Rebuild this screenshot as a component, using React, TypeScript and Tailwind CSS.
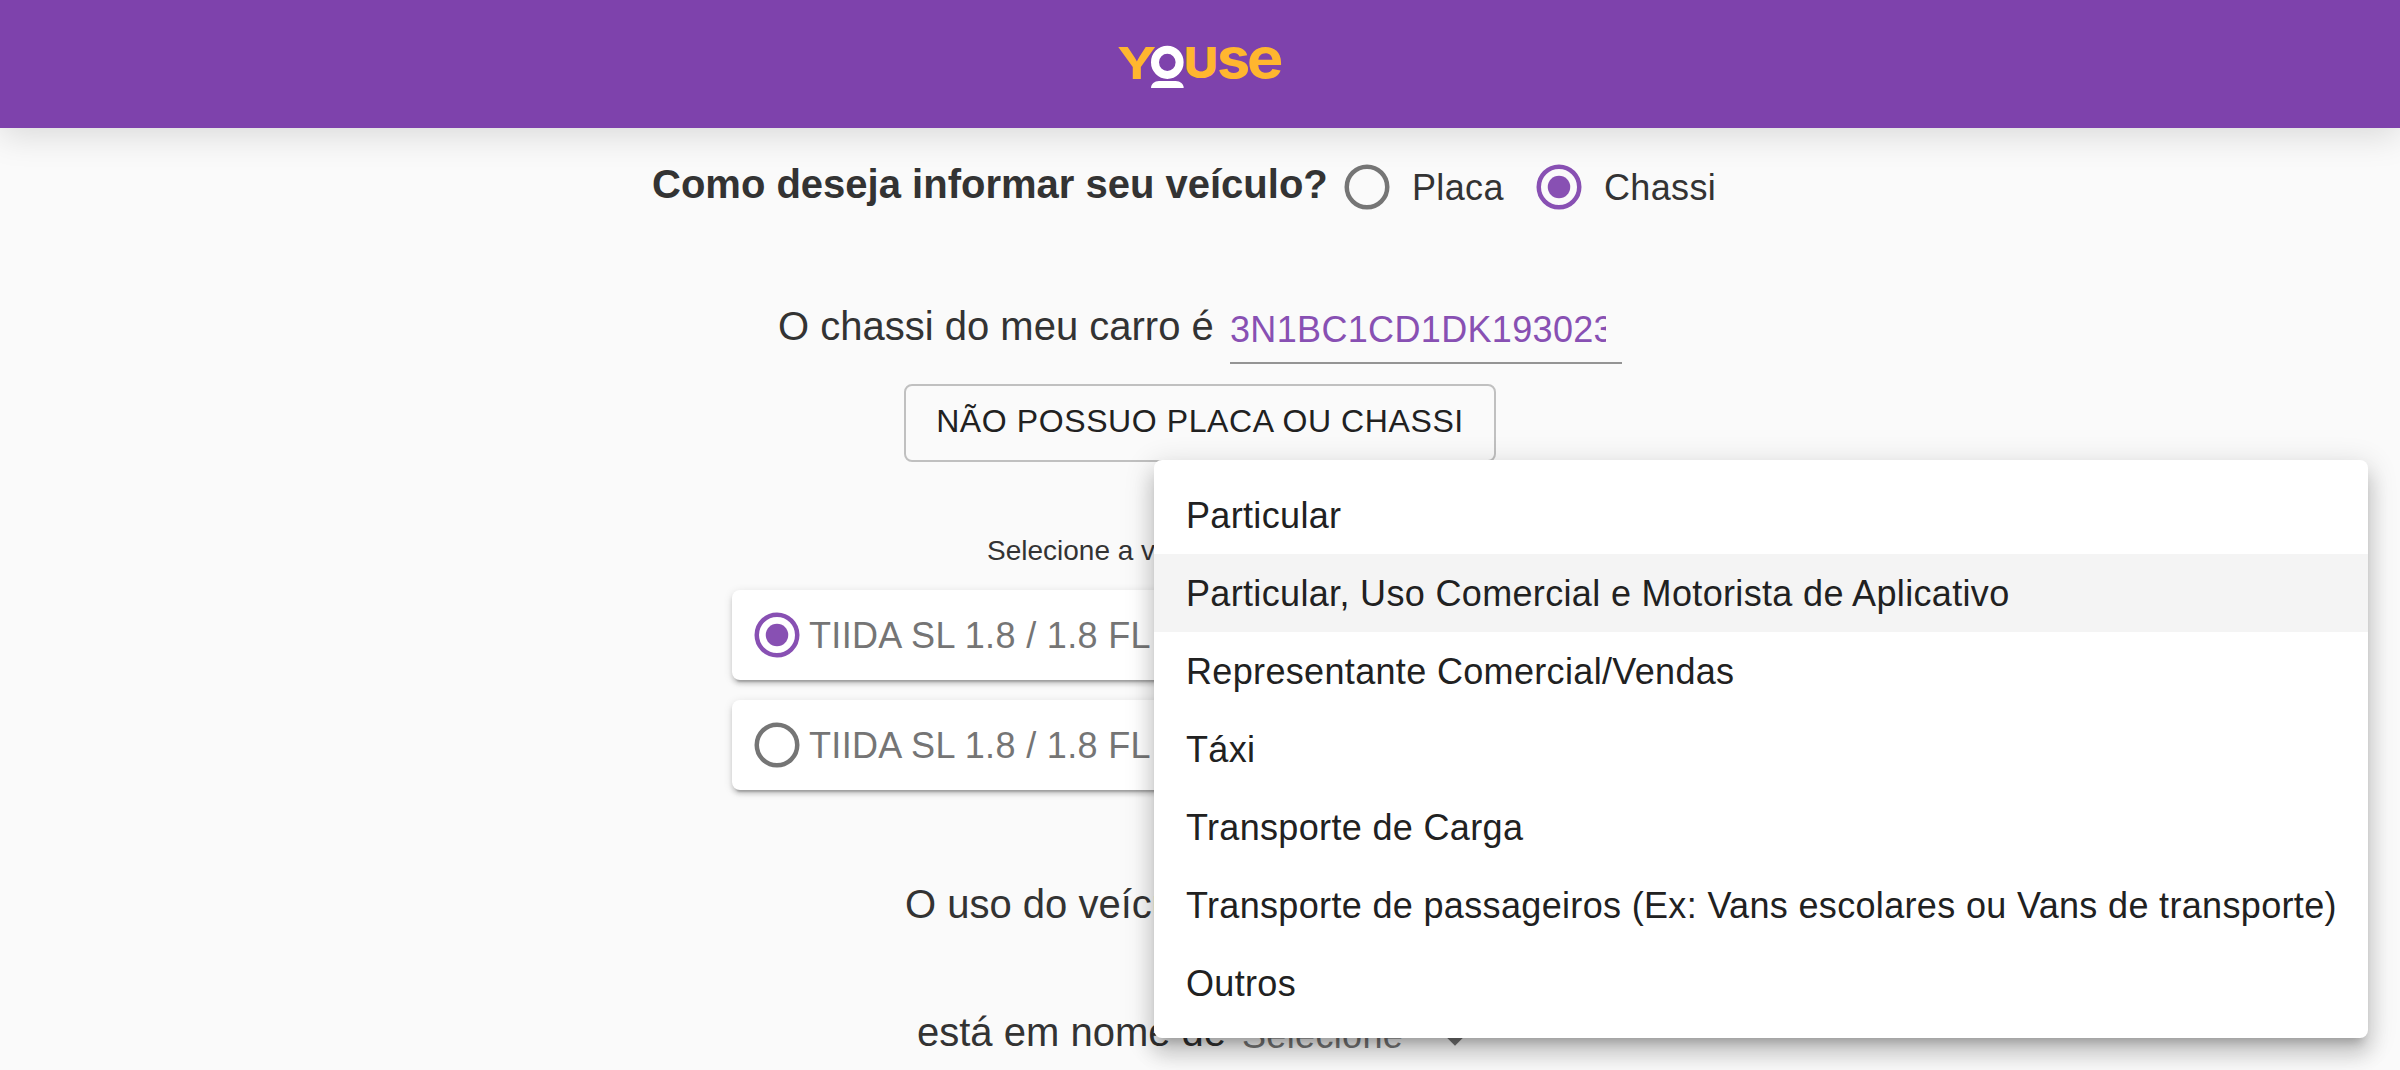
function Radio({ checked = false }: { checked?: boolean }) {
  return (
    <svg
      viewBox="0 0 54 54"
      className={checked ? "size-[54px] shrink-0 text-[#8850b3]" : "size-[54px] shrink-0 text-[#757575]"}
      fill="none"
    >
      <circle cx="27" cy="27" r="20.25" stroke="currentColor" strokeWidth="4.5" />
      {checked && <circle cx="27" cy="27" r="11.25" fill="currentColor" />}
    </svg>
  );
}

function Logo() {
  return (
    <svg viewBox="-10 -20 190 90" className="h-[90px] w-[190px]" fontFamily="Inter, sans-serif">
      <g fill="#ffb62f">
        <text transform="translate(2 37.500) scale(1.24 1)" fontSize="43.500" fontWeight="700">Y</text>
        <text transform="translate(68.800 37.400) scale(1.1 1)" fontSize="43" fontWeight="800">U</text>
        <text transform="translate(102 37.200) scale(1.06 1)" fontSize="56" fontWeight="700">s</text>
        <text transform="translate(132 37.200) scale(1.09 1)" fontSize="56" fontWeight="700">e</text>
      </g>
      <ellipse cx="52.3" cy="21.3" rx="12.3" ry="12.600" fill="none" stroke="#fff" strokeWidth="8" />
      <path d="M36 47c0-4 3.500-7 8-7h16.700c4.500 0 8 3 8 7z" fill="#fff" />
    </svg>
  );
}

const options = [
  "Particular",
  "Particular, Uso Comercial e Motorista de Aplicativo",
  "Representante Comercial/Vendas",
  "Táxi",
  "Transporte de Carga",
  "Transporte de passageiros (Ex: Vans escolares ou Vans de transporte)",
  "Outros",
];

function Version({ checked = false }: { checked?: boolean }) {
  return (
    <label className="flex h-[90px] items-center rounded-lg bg-white pl-[18px] text-[36px] leading-[54px] tracking-[0.00938em] text-[#757575] shadow-[0_6px_2px_-4px_rgba(0,0,0,0.2),0_4px_4px_0_rgba(0,0,0,0.14),0_2px_10px_0_rgba(0,0,0,0.12)]">
      <Radio checked={checked} />
      <span className="ml-[5px] pt-[2px]">TIIDA SL 1.8 / 1.8 FL</span>
    </label>
  );
}

export default function App() {
  return (
    <div className="relative flex h-[1070px] w-[2400px] flex-col overflow-hidden bg-[#fafafa] font-['Liberation_Sans',Arial,sans-serif] text-[#333333]">
      <header className="flex h-32 shrink-0 items-center justify-center bg-[#7e42ac] pt-1 shadow-[0_8px_32px_rgba(0,0,0,0.13)]">
        <Logo />
      </header>

      <main className="flex flex-col">
        <section className="flex h-[168px] items-start pt-[26px] pl-[652px] text-[36px] leading-[54px] tracking-[0.00938em]">
          <h1 className="w-[688px] text-[40px] leading-[60px] font-bold tracking-normal whitespace-nowrap">Como deseja informar seu veículo?</h1>
          <label className="mt-[5px] flex w-[192px] items-center gap-[18px]">
            <Radio />
            <span className="pt-[2px]">Placa</span>
          </label>
          <label className="mt-[5px] flex items-center gap-[18px]">
            <Radio checked />
            <span className="pt-[2px]">Chassi</span>
          </label>
        </section>

        <section className="flex h-[88px] items-start pl-[778px]">
          <span className="w-[452px] text-[40px] leading-[60px] whitespace-nowrap">O chassi do meu carro é</span>
          <div className="mt-[6px] h-[62px] w-[392px] border-b-2 border-[#949494] pt-px text-[36px] leading-[54px] tracking-[0.00938em] text-[#8850b3]">
            <div className="w-[376px] overflow-hidden whitespace-nowrap">3N1BC1CD1DK193023</div>
          </div>
        </section>

        <button className="mx-auto h-[78px] w-[592px] rounded-lg border-2 border-black/23 pb-[4px] text-[32px] leading-[54px] tracking-[0.6px] whitespace-nowrap text-[#212121]">
          NÃO POSSUO PLACA OU CHASSI
        </button>

        <p className="mt-[68px] h-[60px] pl-[987px] text-[28px] leading-[42px]">Selecione a versão</p>

        <div className="mx-auto flex w-[936px] flex-col gap-5">
          <Version checked />
          <Version />
        </div>

        <p className="mt-[84px] pl-[905px] text-[40px] leading-[60px]">O uso do veículo</p>

        <div className="mt-[68px] flex h-[60px] items-start pl-[917px] text-[40px] leading-[60px]">
          <span className="w-[325px] whitespace-nowrap">está em nome de</span>
          <span className="mt-[7px] w-[186px] text-[36px] leading-[54px] tracking-[0.00938em] text-[#757575]">Selecione</span>
          <svg viewBox="0 0 24 24" className="mt-px size-[54px] text-[#757575]" fill="currentColor">
            <path d="M7 14l5 5 5-5z" />
          </svg>
        </div>
      </main>

      <ul className="absolute top-[460px] left-[1154px] h-[578px] w-[1214px] rounded-lg bg-white py-4 text-[36px] leading-[54px] tracking-[0.00938em] text-[#212121] shadow-[0_10px_10px_-6px_rgba(0,0,0,0.2),0_16px_20px_2px_rgba(0,0,0,0.14),0_6px_28px_4px_rgba(0,0,0,0.12)]">
        {options.map((option, index) => (
          <li
            key={option}
            className={index === 1 ? "bg-[#f4f4f4] px-8 pt-[13px] pb-[11px] whitespace-nowrap" : "px-8 pt-[13px] pb-[11px] whitespace-nowrap"}
          >
            {option}
          </li>
        ))}
      </ul>
    </div>
  );
}
